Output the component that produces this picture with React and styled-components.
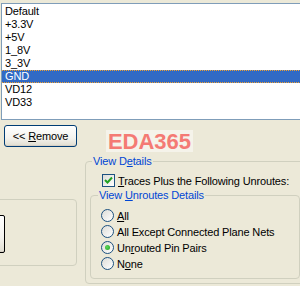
import React from 'react';
import styled, { createGlobalStyle } from 'styled-components';

const Global = createGlobalStyle`
  html, body { margin: 0; padding: 0; background: #ece9d8; }
  body { font-family: "Liberation Sans", Arial, sans-serif; font-size: 11px; }
`;

const Window = styled.div`
  position: relative;
  width: 300px;
  height: 286px;
  overflow: hidden;
  background: #ece9d8;
  font-family: "Liberation Sans", Arial, sans-serif;
  font-size: 11px;
  letter-spacing: -0.15px;
  color: #000;
`;

const TopStrip = styled.div`
  height: 3px;
`;

const ListBox = styled.div`
  margin-left: 1px;
  margin-right: -2px;
  height: 114px;
  padding-top: 1px;
  box-sizing: content-box;
  border: 1px solid #7f9db9;
  background: #fff;
`;

const Row = styled.div`
  height: 13px;
  padding-left: 3px;
  box-sizing: border-box;
  line-height: 11px;
  color: ${({ $selected }) => ($selected ? '#fff' : '#000')};
  background: ${({ $selected }) => ($selected ? '#316ac5' : 'transparent')};
  border-top: 1px dotted ${({ $selected }) => ($selected ? '#f0a030' : 'transparent')};
  border-bottom: 1px dotted ${({ $selected }) => ($selected ? '#f0a030' : 'transparent')};
`;

const Lower = styled.div`
  display: flex;
  height: 167px;
`;

const LeftCol = styled.div`
  width: 85px;
  flex: none;
  display: flex;
  flex-direction: column;
`;

const XPButton = styled.button`
  font-family: inherit;
  font-size: 11px;
  letter-spacing: inherit;
  color: #000;
  height: 22px;
  padding: 0;
  border: 1px solid #003c74;
  border-radius: 3px;
  background: linear-gradient(#ffffff, #f4f3ee 60%, #e0ddd0);
  box-shadow: inset 0 -1px 0 #d6d0c5;
`;

const RemoveButton = styled(XPButton)`
  margin: 5px 0 0 4px;
  width: 73px;
`;

const Group = styled.div`
  position: relative;
  border: 1px solid #d0d0bf;
  border-radius: 4px;
  box-sizing: border-box;
`;

const LeftGroup = styled(Group)`
  margin: 52px 0 0 -10px;
  width: 87px;
  height: 67px;
  padding-top: 15px;
`;

const HiddenButton = styled(XPButton)`
  display: block;
  width: 40px;
  height: 38px;
  margin-left: -26px;
  border-radius: 2px;
  border-color: #000;
`;

const GroupLabel = styled.span`
  position: absolute;
  top: -7px;
  left: ${({ $left }) => $left}px;
  padding: 0 1px;
  background: #ece9d8;
  color: #0046d5;
  line-height: 13px;
  white-space: nowrap;
`;

const DetailsGroup = styled(Group)`
  margin: 41px -10px 0 0;
  width: 225px;
  height: 123px;
  padding: 12px 0 0 16px;
`;

const UnroutesGroup = styled(Group)`
  margin: 8px 0 0 -12px;
  width: 210px;
  height: 84px;
  padding: 13px 0 0 10px;
`;

const CheckRow = styled.div`
  display: flex;
  align-items: center;
  gap: 3px;
  height: 13px;
  white-space: nowrap;
`;

const Box = styled.span`
  width: 11px;
  height: 11px;
  border: 1px solid #1c5180;
  background: linear-gradient(135deg, #dcdcd7, #fff);
  display: flex;
  align-items: center;
  justify-content: center;
  flex: none;
`;

const RadioList = styled.div`
  display: flex;
  flex-direction: column;
  gap: 3px;
`;

const RadioRow = styled.div`
  display: flex;
  align-items: center;
  gap: 3px;
  height: 13px;
  white-space: nowrap;
`;

const Circle = styled.span`
  width: 11px;
  height: 11px;
  border: 1px solid #1c5180;
  border-radius: 50%;
  background: linear-gradient(135deg, #dcdcd7, #fff);
  display: flex;
  align-items: center;
  justify-content: center;
  flex: none;
`;

const Dot = styled.span`
  width: 5px;
  height: 5px;
  border-radius: 50%;
  background: radial-gradient(circle at 40% 40%, #5bd65b, #21a121);
`;

const U = styled.span`
  text-decoration: underline;
`;

const Watermark = styled.div`
  position: absolute;
  left: 106px;
  top: 130px;
  width: 87px;
  height: 22px;
  background: #f5f3ea;
  color: #f47a74;
  font-family: "Liberation Sans", Arial, sans-serif;
  font-weight: bold;
  font-size: 22px;
  line-height: 24px;
  text-align: center;
  letter-spacing: 0;
`;

const nets = ['Default', '+3.3V', '+5V', '1_8V', '3_3V', 'GND', 'VD12', 'VD33'];

const Radio = ({ checked, children }) => (
  <RadioRow>
    <Circle>{checked && <Dot />}</Circle>
    <span>{children}</span>
  </RadioRow>
);

export default function App() {
  return (
    <Window>
      <Global />
      <TopStrip />
      <ListBox>
        {nets.map((n) => (
          <Row key={n} $selected={n === 'GND'}>{n}</Row>
        ))}
      </ListBox>
      <Lower>
        <LeftCol>
          <RemoveButton>&lt;&lt; <U>R</U>emove</RemoveButton>
          <LeftGroup>
            <HiddenButton />
          </LeftGroup>
        </LeftCol>
        <DetailsGroup>
          <GroupLabel $left={6}>View D<U>e</U>tails</GroupLabel>
          <CheckRow>
            <Box>
              <svg width="9" height="9" viewBox="0 0 9 9">
                <path d="M1 4 L3.5 6.5 L8 1.5" stroke="#21a121" strokeWidth="2" fill="none" />
              </svg>
            </Box>
            <span><U>T</U>races Plus the Following Unroutes:</span>
          </CheckRow>
          <UnroutesGroup>
            <GroupLabel $left={7}>View <U>U</U>nroutes Details</GroupLabel>
            <RadioList>
              <Radio><U>A</U>ll</Radio>
              <Radio>All Except Connected Plane Nets</Radio>
              <Radio checked>Un<U>r</U>outed Pin Pairs</Radio>
              <Radio>N<U>o</U>ne</Radio>
            </RadioList>
          </UnroutesGroup>
        </DetailsGroup>
      </Lower>
      <Watermark>EDA365</Watermark>
    </Window>
  );
}
